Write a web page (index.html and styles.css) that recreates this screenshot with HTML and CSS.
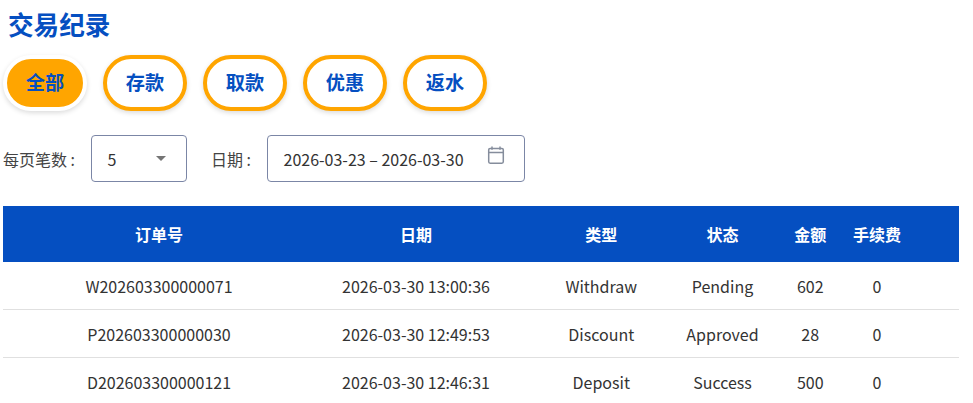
FILE: index.html
```html
<!DOCTYPE html>
<html lang="zh">
<head>
<meta charset="utf-8">
<title>交易纪录</title>
<link rel="stylesheet" href="styles.css">
</head>
<body>
<main class="page">
  <h1 class="title">交易纪录</h1>
  <div class="tabs">
    <button class="tab tab-active">全部</button>
    <button class="tab">存款</button>
    <button class="tab">取款</button>
    <button class="tab">优惠</button>
    <button class="tab">返水</button>
  </div>
  <div class="filters">
    <span class="label label-size">每页笔数 :</span>
    <div class="field field-size">
      <span>5</span>
      <svg class="caret" width="10" height="5" viewBox="0 0 10 5"><path d="M0 0h10L5 5z" fill="#757575"/></svg>
    </div>
    <span class="label label-date">日期 :</span>
    <div class="field field-date">
      <span>2026-03-23 – 2026-03-30</span>
      <svg class="calendar" width="18" height="18" viewBox="0 0 18 18" fill="none" stroke="#858d9c" stroke-width="1.5"><rect x="1.7" y="2.4" width="14.6" height="14.8" rx="1.4"/><path d="M1.7 6.5h14.6M5 .4v3.4M13 .4v3.4"/></svg>
    </div>
  </div>
  <table class="records">
    <colgroup>
      <col class="c-order"><col class="c-date"><col class="c-type"><col class="c-status"><col class="c-amount"><col class="c-fee"><col class="c-rest">
    </colgroup>
    <thead>
      <tr><th>订单号</th><th>日期</th><th>类型</th><th>状态</th><th class="amount">金额</th><th>手续费</th><th></th></tr>
    </thead>
    <tbody>
      <tr><td>W202603300000071</td><td>2026-03-30 13:00:36</td><td>Withdraw</td><td>Pending</td><td class="amount">602</td><td>0</td><td></td></tr>
      <tr><td>P202603300000030</td><td>2026-03-30 12:49:53</td><td>Discount</td><td>Approved</td><td class="amount">28</td><td>0</td><td></td></tr>
      <tr><td>D202603300000121</td><td>2026-03-30 12:46:31</td><td>Deposit</td><td>Success</td><td class="amount">500</td><td>0</td><td></td></tr>
    </tbody>
  </table>
</main>
</body>
</html>
```
FILE: styles.css
```css
* { box-sizing: border-box; }
html, body { margin: 0; height: 403px; overflow: hidden; background: #fff; }
body { font-family: "Noto Sans CJK SC", "Noto Sans", sans-serif; color: #333; font-size: 16px; }
.page { padding: 0 14px 0 3px; }
.title { margin: 0; padding: 6px 0 0 5px; height: 55px; font-size: 25.6px; line-height: 36px; font-weight: 700; color: #054fc1; }
.tabs { display: flex; gap: 16px; height: 56px; }
.tab { width: 84px; height: 56px; padding: 0; border: 4px solid #ffa500; border-radius: 28px; background: #fff; color: #054fc1; font: 700 19.2px/1 "Noto Sans CJK SC", sans-serif; box-shadow: 0 2px 5px rgba(0,0,0,.14); }
.tab-active { background: #ffa500; border-color: #fff; }
.filters { display: flex; align-items: center; height: 47px; margin-top: 24px; }
.label { font-size: 16px; color: #444; }
.label-size { width: 88px; }
.label-date { width: 56px; margin-left: 24px; }
.field { height: 47px; border: 1px solid #7b86a6; border-radius: 4px; display: flex; align-items: center; justify-content: space-between; font-size: 16px; }
.field-size { width: 96px; padding: 0 20px 0 15.5px; }
.field-date { width: 258px; padding: 0 19px 0 15.5px; }
.calendar { margin-top: -7px; }
.records { width: 956px; margin-top: 24px; border-collapse: separate; border-spacing: 0; table-layout: fixed; }
.c-order { width: 312px; } .c-date { width: 202px; } .c-type { width: 168.5px; } .c-status { width: 74px; }
.c-amount { width: 93.5px; } .c-fee { width: 48px; } .c-rest { width: 58px; }
th { height: 56px; padding: 0; background: #054fc1; color: #fff; font-size: 16px; font-weight: 700; text-align: center; }
td { height: 48px; padding: 0; text-align: center; border-bottom: 1px solid #e0e0e0; white-space: nowrap; }
.amount { padding-left: 8px; }
```
